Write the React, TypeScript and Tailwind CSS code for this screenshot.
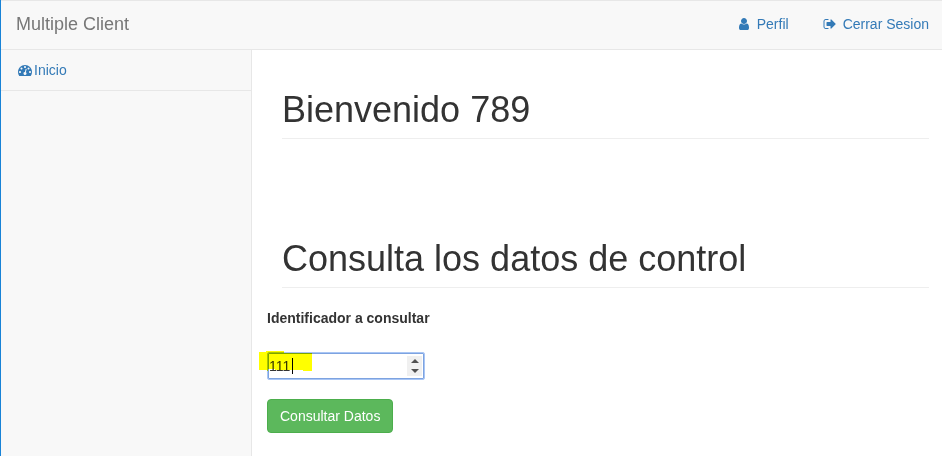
import { useState } from "react";
import type { ReactNode } from "react";

const DASHBOARD =
  "M384 1152q0-53-37.5-90.5t-90.5-37.5-90.5 37.5-37.5 90.5 37.5 90.5 90.5 37.5 90.5-37.5 37.5-90.5zm192-448q0-53-37.5-90.5t-90.5-37.5-90.5 37.5-37.5 90.5 37.5 90.5 90.5 37.5 90.5-37.5 37.5-90.5zm428 481l101-382q6-26-7.5-48.5t-38.5-29.5-48 6.5-30 39.5l-101 382q-60 5-107 43.5t-63 98.5q-20 77 20 146t117 89 146-20 89-117q16-60-6-117t-72-91zm660-33q0-53-37.5-90.5t-90.5-37.5-90.5 37.5-37.5 90.5 37.5 90.5 90.5 37.5 90.5-37.5 37.5-90.5zm-640-640q0-53-37.5-90.5t-90.5-37.5-90.5 37.5-37.5 90.5 37.5 90.5 90.5 37.5 90.5-37.5 37.5-90.5zm448 192q0-53-37.5-90.5t-90.5-37.5-90.5 37.5-37.5 90.5 37.5 90.5 90.5 37.5 90.5-37.5 37.5-90.5zm320 448q0 261-141 483-19 29-54 29h-1402q-35 0-54-29-141-221-141-483 0-182 71-348t191-286 286-191 348-71 348 71 286 191 191 286 71 348z";
const USER =
  "M1536 1399q0 109-62.5 187t-150.5 78h-854q-88 0-150.5-78t-62.5-187q0-85 8.5-160.5t31.5-152 58.5-131 94-89 134.5-34.5q131 128 313 128t313-128q76 0 134.5 34.5t94 89 58.5 131 31.5 152 8.5 160.5zm-256-887q0 159-112.5 271.5t-271.5 112.5-271.5-112.5-112.5-271.5 112.5-271.5 271.5-112.5 271.5 112.5 112.5 271.5z";
const SIGN_OUT =
  "M704 1440q0 4 1 20t.5 26.5-3 23.5-10 19.5-20.5 6.5h-320q-119 0-203.5-84.5t-84.5-203.5v-704q0-119 84.5-203.5t203.5-84.5h320q13 0 22.5 9.5t9.5 22.5q0 4 1 20t.5 26.5-3 23.5-10 19.5-20.5 6.5h-320q-66 0-113 47t-47 113v704q0 66 47 113t113 47h312l11.5 1 11.5 3 8 5.5 7 9 2 13.5zm928-544q0 26-19 45l-544 544q-19 19-45 19t-45-19-19-45v-288h-448q-26 0-45-19t-19-45v-384q0-26 19-45t45-19h448v-288q0-26 19-45t45-19 45 19l544 544q19 19 19 45z";

function Icon({ path }: { path: string }) {
  return (
    <svg viewBox="0 0 1792 1792" className="size-3.5 shrink-0" fill="currentColor" aria-hidden="true">
      <path d={path} />
    </svg>
  );
}

function PageHeader({ children }: { children: ReactNode }) {
  return (
    <h1 className="ml-[15px] border-b border-[#eeeeee] pb-2 text-4xl leading-10 font-normal">
      {children}
    </h1>
  );
}

export default function App() {
  const [value, setValue] = useState("111");
  const step = (delta: number) => setValue(String(Number(value) + delta));

  return (
    <div className="flex min-h-screen flex-col border-l border-[#1883d7] bg-white font-['Liberation_Sans',Arial,sans-serif] text-sm leading-5 text-[#333333]">
      <nav className="flex h-[50px] items-center justify-between border-y border-[#e7e7e7] bg-[#f8f8f8] pr-[13px] pb-0.5 pl-[15px]">
        <a href="#" className="text-lg leading-5 text-[#777777]">
          Multiple Client
        </a>
        <ul className="flex gap-[34px] text-[#337ab7]">
          <li>
            <a href="#perfil" className="flex items-center gap-1.5">
              <Icon path={USER} />
              Perfil
            </a>
          </li>
          <li>
            <a href="#salir" className="flex items-center gap-1.5">
              <Icon path={SIGN_OUT} />
              Cerrar Sesion
            </a>
          </li>
        </ul>
      </nav>

      <div className="flex flex-1">
        <aside className="w-[251px] shrink-0 border-r border-[#e7e7e7] bg-[#f8f8f8]">
          <a
            href="#inicio"
            className="flex items-center gap-0.5 border-b border-[#e7e7e7] px-[17px] py-2.5 text-[#337ab7]"
          >
            <Icon path={DASHBOARD} />
            Inicio
          </a>
        </aside>

        <main className="min-w-0 flex-1 pt-10 pr-[13px] pb-5 pl-[15px]">
          <PageHeader>Bienvenido 789</PageHeader>
          <div className="pt-[100px]">
            <PageHeader>Consulta los datos de control</PageHeader>
          </div>

          <form className="mt-5" onSubmit={(e) => e.preventDefault()}>
            <label htmlFor="identificador" className="block font-bold">
              Identificador a consultar
            </label>
            <div className="relative mt-6 w-[158px]">
              <input
                id="identificador"
                type="number"
                value={value}
                onChange={(e) => setValue(e.target.value)}
                className="block h-7 w-full rounded-xs border border-[#a9c6f5] bg-white px-px text-sm ring-1 ring-[#7da3e0] outline-none ring-inset [appearance:textfield]"
              />
              <span className="pointer-events-none absolute top-1.5 left-[25px] h-4 w-px bg-black" />
              <div className="absolute top-1 right-[3px] flex h-5 w-[15px] flex-col bg-[#f0f0f0]">
                <button
                  type="button"
                  aria-label="Incrementar"
                  onClick={() => step(1)}
                  className="flex flex-1 items-center justify-center"
                >
                  <svg viewBox="0 0 8 4" className="h-1 w-2" fill="#505050">
                    <path d="M0 4 4 0l4 4z" />
                  </svg>
                </button>
                <button
                  type="button"
                  aria-label="Disminuir"
                  onClick={() => step(-1)}
                  className="flex flex-1 items-center justify-center"
                >
                  <svg viewBox="0 0 8 4" className="h-1 w-2" fill="#505050">
                    <path d="M0 0h8L4 4z" />
                  </svg>
                </button>
              </div>
              <svg
                viewBox="0 0 53 20"
                className="pointer-events-none absolute -top-px -left-2 h-5 w-[53px] mix-blend-multiply"
                fill="#ffff00"
                aria-hidden="true"
              >
                <path d="M0 1h7V0h18v2h28v18h-9v-1H16v-1H9v2H8v-1H0z" />
              </svg>
            </div>
            <button
              type="submit"
              className="mt-[19px] rounded border border-[#4cae4c] bg-[#5cb85c] px-3 py-1.5 text-white"
            >
              Consultar Datos
            </button>
          </form>
        </main>
      </div>
    </div>
  );
}
